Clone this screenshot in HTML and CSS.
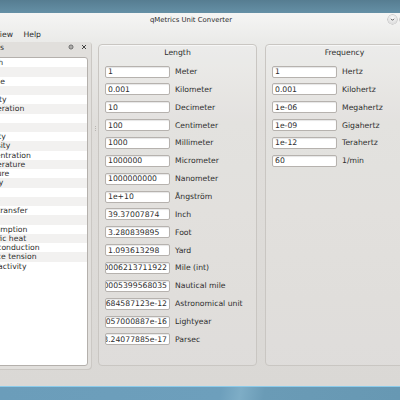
FILE: index.html
```html
<!DOCTYPE html>
<html lang="en">
<head>
    <meta charset="UTF-8">
    <title>qMetrics Unit Converter</title>
    <link rel="stylesheet" href="styles.css">
</head>
<body>
    <div class="desktop-top"></div>

    <div class="window">
        <div class="titlebar">
            <span class="title">qMetrics Unit Converter</span>
            <div class="title-btns">
                <span class="wm-btn">
                    <svg width="9" height="9" viewBox="0 0 9 9"><path d="M3 3.8 L4.5 5.3 L6 3.8" fill="none" stroke="#555" stroke-width="1"/></svg>
                </span>
                <span class="wm-btn">
                    <svg width="9" height="9" viewBox="0 0 9 9"><path d="M3 5.2 L4.5 3.7 L6 5.2" fill="none" stroke="#555" stroke-width="1"/></svg>
                </span>
                <span class="wm-btn">
                    <svg width="9" height="9" viewBox="0 0 9 9"><path d="M3.2 3.2 L5.8 5.8 M5.8 3.2 L3.2 5.8" fill="none" stroke="#555" stroke-width="1"/></svg>
                </span>
            </div>
        </div>

        <div class="menubar">
            <span>View</span>
            <span>Help</span>
        </div>

        <div class="main">
            <!-- Lista kategorii -->
            <div class="dock">
                <div class="dock-title">
                    <span>Units</span>
                    <span class="dock-btns">
                        <svg width="6" height="6" viewBox="0 0 6 6"><circle cx="3" cy="3" r="2" fill="none" stroke="#555" stroke-width="0.9"/><circle cx="3" cy="3" r="0.7" fill="#555"/></svg>
                        <svg width="6" height="6" viewBox="0 0 6 6"><path d="M1 1 L5 5 M5 1 L1 5" stroke="#444" stroke-width="1"/></svg>
                    </span>
                </div>
                <ul class="categories">
                    <li>Length</li>
                    <li>Area</li>
                    <li>Volume</li>
                    <li>Mass</li>
                    <li>Velocity</li>
                    <li>Acceleration</li>
                    <li>Force</li>
                    <li>Time</li>
                    <li>Density</li>
                    <li>Viscosity</li>
                    <li>Concentration</li>
                    <li>Temperature</li>
                    <li>Pressure</li>
                    <li>Energy</li>
                    <li>Work</li>
                    <li>Power</li>
                    <li>Heat transfer</li>
                    <li>Angle</li>
                    <li>Consumption</li>
                    <li>Specific heat</li>
                    <li>Heat conduction</li>
                    <li>Surface tension</li>
                    <li>Radioactivity</li>
                </ul>
            </div>

            <div class="splitter"><span class="grip"></span></div>

            <div class="central">
                <div class="group">
                    <div class="group-title">Length</div>
                    <div class="rows">
                        <div class="row"><div class="field"><span>1</span></div><span class="unit">Meter</span></div>
                        <div class="row"><div class="field"><span>0.001</span></div><span class="unit">Kilometer</span></div>
                        <div class="row"><div class="field"><span>10</span></div><span class="unit">Decimeter</span></div>
                        <div class="row"><div class="field"><span>100</span></div><span class="unit">Centimeter</span></div>
                        <div class="row"><div class="field"><span>1000</span></div><span class="unit">Millimeter</span></div>
                        <div class="row"><div class="field"><span>1000000</span></div><span class="unit">Micrometer</span></div>
                        <div class="row"><div class="field"><span>1000000000</span></div><span class="unit">Nanometer</span></div>
                        <div class="row"><div class="field"><span>1e+10</span></div><span class="unit">Ångström</span></div>
                        <div class="row"><div class="field"><span>39.37007874</span></div><span class="unit">Inch</span></div>
                        <div class="row"><div class="field"><span>3.280839895</span></div><span class="unit">Foot</span></div>
                        <div class="row"><div class="field"><span>1.093613298</span></div><span class="unit">Yard</span></div>
                        <div class="row"><div class="field"><span>0.0006213711922</span></div><span class="unit">Mile (int)</span></div>
                        <div class="row"><div class="field"><span>0.0005399568035</span></div><span class="unit">Nautical mile</span></div>
                        <div class="row"><div class="field"><span>6.684587123e-12</span></div><span class="unit">Astronomical unit</span></div>
                        <div class="row"><div class="field"><span>1.057000887e-16</span></div><span class="unit">Lightyear</span></div>
                        <div class="row"><div class="field"><span>3.24077885e-17</span></div><span class="unit">Parsec</span></div>
                    </div>
                </div>

                <div class="group">
                    <div class="group-title">Frequency</div>
                    <div class="rows">
                        <div class="row"><div class="field"><span>1</span></div><span class="unit">Hertz</span></div>
                        <div class="row"><div class="field"><span>0.001</span></div><span class="unit">Kilohertz</span></div>
                        <div class="row"><div class="field"><span>1e-06</span></div><span class="unit">Megahertz</span></div>
                        <div class="row"><div class="field"><span>1e-09</span></div><span class="unit">Gigahertz</span></div>
                        <div class="row"><div class="field"><span>1e-12</span></div><span class="unit">Terahertz</span></div>
                        <div class="row"><div class="field"><span>60</span></div><span class="unit">1/min</span></div>
                    </div>
                </div>
            </div>
        </div>
    </div>

    <div class="desktop-bottom"></div>
</body>
</html>
```

FILE: styles.css
```css
/* Okno w stylu Oxygen */
html {
    overflow: hidden;
}
body {
    margin: 0;
    width: 400px;
    height: 400px;
    overflow: hidden;
    position: relative;
    background-color: #6a9cb8;
    font-family: "DejaVu Sans", sans-serif;
    font-size: 7.7px;
    color: #333;
}
.desktop-top {
    height: 13px;
    background: linear-gradient(#567d91, #6590a6);
}
.window {
    margin-left: -44px;
    width: 470px;
    height: 373px;
    display: flex;
    flex-direction: column;
    background: linear-gradient(#f5f5f4 0, #eaeae8 30px, #e0dedb 110px, #dad8d5 100%);
}
.titlebar {
    height: 14px;
    display: flex;
    align-items: center;
    justify-content: center;
    position: relative;
}
.title {
    font-size: 6.9px;
    color: #2b2b2b;
}
.title-btns {
    position: absolute;
    left: 432px;
    top: 2px;
    display: flex;
    gap: 3px;
}
.wm-btn {
    width: 9px;
    height: 9px;
    border-radius: 50%;
    background: radial-gradient(circle at 50% 35%, #fbfbfb, #d2d2d2);
    box-shadow: 0 0 0 0.5px #a8a8a8;
    display: flex;
}
.menubar {
    height: 14px;
    display: flex;
    align-items: center;
    gap: 10.5px;
    padding-left: 38.7px;
    color: #2b2b2b;
}
.main {
    flex: 1;
    display: flex;
    min-height: 0;
}
/* Dock z kategoriami */
.dock {
    width: 136px;
    flex: none;
    margin-top: 1px;
    height: 328px;
    display: flex;
    flex-direction: column;
    background-color: #e1dfdc;
    border-radius: 0 4px 4px 0;
    box-shadow: inset -1px -1px 0 #cbc8c4;
}
.dock-title {
    height: 10px;
    display: flex;
    align-items: center;
    padding-left: 28.3px;
    padding-right: 5.5px;
}
.dock-btns {
    margin-left: auto;
    display: flex;
    gap: 7px;
}
.categories {
    list-style: none;
    margin: 5px 4px 0 4px;
    padding: 0;
    height: 309px;
    box-sizing: border-box;
    background-color: #fff;
    border: 1px solid #b4b0ac;
    border-radius: 3px;
    overflow: hidden;
}
.categories li {
    height: 9.26px;
    line-height: 9.26px;
    padding-left: 15.5px;
    white-space: nowrap;
    color: #2e2e2e;
}
.categories li:nth-child(even) {
    background-color: #f2f1f0;
}
.splitter {
    width: 6px;
    flex: none;
    display: flex;
    justify-content: center;
    padding-top: 85px;
}
.grip {
    width: 1px;
    height: 6px;
    background: repeating-linear-gradient(#b8b5b1 0 1px, transparent 1px 2px);
}
/* Grupy jednostek */
.central {
    flex: none;
    display: flex;
    gap: 8px;
    padding-top: 3px;
}
.group {
    width: 159px;
    flex: none;
    height: 322px;
    box-sizing: border-box;
    padding: 3px 0 0 6px;
    border: 1px solid #c9c6c2;
    border-radius: 4px;
    background-color: rgba(255, 255, 255, 0.12);
    box-shadow: inset 0 1px 0 rgba(255, 255, 255, 0.6);
}
.group-title {
    height: 10px;
    line-height: 10px;
    text-align: center;
    padding-right: 6px;
    color: #2e2e2e;
}
.rows {
    margin-top: 7.5px;
    display: flex;
    flex-direction: column;
    gap: 5.87px;
}
.row {
    height: 12px;
    display: flex;
    align-items: center;
    gap: 5px;
}
.field {
    width: 65px;
    height: 12px;
    box-sizing: border-box;
    padding: 0 2px;
    display: flex;
    align-items: center;
    justify-content: flex-end;
    overflow: hidden;
    background-color: #fff;
    border: 1px solid #b6b2ae;
    border-radius: 2px;
    box-shadow: inset 0 1px 1px rgba(0, 0, 0, 0.1);
    color: #2e2e2e;
}
.field span {
    flex-shrink: 0;
    white-space: nowrap;
}
.field::after {
    content: "";
    flex: 1 0 0;
}
.unit {
    white-space: nowrap;
    color: #2e2e2e;
}
.desktop-bottom {
    height: 13px;
    border-top: 1px solid #8ccbea;
    background: linear-gradient(100deg, #6b9dba 0, #6d9fbc 55%, #7eadc6 60%, #6a9bb6 66%, #6798b3 100%);
}
```
